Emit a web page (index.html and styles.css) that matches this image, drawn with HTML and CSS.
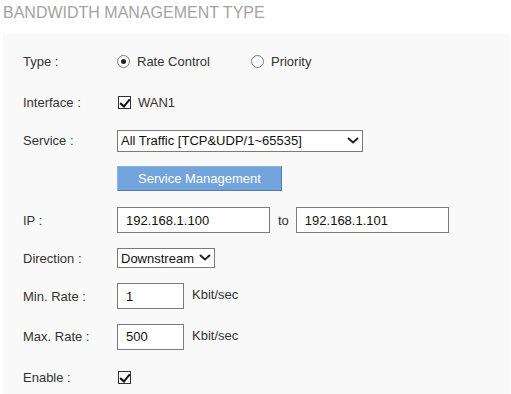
FILE: index.html
```html
<!DOCTYPE html>
<html lang="en">
<head>
    <meta charset="UTF-8">
    <meta name="viewport" content="width=device-width, initial-scale=1.0">
    <title>Bandwidth Management</title>
    <link rel="stylesheet" href="styles.css">
</head>

<body>
    <p class="title">BANDWIDTH MANAGEMENT TYPE</p>
    <div class="panel">
        <div class="label">Type :</div>
        <div class="field">
            <label class="opt"><input type="radio" name="type" class="radio" checked> Rate Control</label>
            <label class="opt opt-next"><input type="radio" name="type" class="radio"> Priority</label>
        </div>

        <div class="label">Interface :</div>
        <div class="field">
            <label class="opt"><input type="checkbox" class="check" checked> WAN1</label>
        </div>

        <div class="label">Service :</div>
        <div class="field">
            <span class="select-wrap">
                <select class="select service-select">
                    <option>All Traffic [TCP&amp;UDP/1~65535]</option>
                </select>
                <svg class="chevron" width="12" height="7" viewBox="0 0 12 7"><path d="M1 1 L6 5.5 L11 1" fill="none" stroke="#222" stroke-width="2"/></svg>
            </span>
        </div>

        <div class="label"></div>
        <div class="field">
            <button class="blue-btn">Service Management</button>
        </div>

        <div class="label">IP :</div>
        <div class="field">
            <input type="text" class="text-input ip-input" value="192.168.1.100">
            <span class="to">to</span>
            <input type="text" class="text-input ip-input" value="192.168.1.101">
        </div>

        <div class="label">Direction :</div>
        <div class="field">
            <span class="select-wrap">
                <select class="select dir-select">
                    <option>Downstream</option>
                    <option>Upstream</option>
                </select>
                <svg class="chevron" width="12" height="7" viewBox="0 0 12 7"><path d="M1 1 L6 5.5 L11 1" fill="none" stroke="#222" stroke-width="2"/></svg>
            </span>
        </div>

        <div class="label">Min. Rate :</div>
        <div class="field">
            <input type="text" class="text-input rate-input" value="1">
            <span class="unit">Kbit/sec</span>
        </div>

        <div class="label">Max. Rate :</div>
        <div class="field">
            <input type="text" class="text-input rate-input" value="500">
            <span class="unit">Kbit/sec</span>
        </div>

        <div class="label">Enable :</div>
        <div class="field">
            <input type="checkbox" class="check" checked>
        </div>
    </div>
</body>
</html>
```

FILE: styles.css
```css
*{
    font-family: "Liberation Sans", Arial, sans-serif;
    box-sizing: border-box;
}
body{
    margin: 0;
    padding: 4px 1px 0 3px;
    background-color: #ffffff;
    color: #333333;
    font-size: 13px;
}
.title{
    margin: 0 0 12px 0;
    font-size: 16px;
    line-height: 18px;
    color: #a3a3a3;
}
.panel{
    background-color: #f9f9f9;
    padding: 7px 0 0 20px;
    min-height: 362px;
    display: grid;
    grid-template-columns: 94px 1fr;
    grid-template-rows: 40px 42px 35px 41px 42px 34px 42px 39px 42px;
    align-items: center;
}
.label{
    font-size: 13px;
}
.field{
    display: flex;
    align-items: center;
}
.opt{
    display: flex;
    align-items: center;
    gap: 7px;
}
.opt-next{
    margin-left: 41px;
}
.radio{
    appearance: none;
    margin: 0 0 0 0;
    width: 13px;
    height: 13px;
    border: 1px solid #7a7a7a;
    border-radius: 50%;
    background-color: #ffffff;
    display: flex;
    align-items: center;
    justify-content: center;
}
.radio:checked::before{
    content: "";
    width: 5px;
    height: 5px;
    border-radius: 50%;
    background-color: #222222;
}
.check{
    appearance: none;
    margin: 0 0 0 1px;
    width: 13px;
    height: 13px;
    border: 1px solid #333333;
    background-color: #ffffff;
    position: relative;
}
.check:checked::before{
    content: "";
    position: absolute;
    left: 3px;
    top: 0px;
    width: 4px;
    height: 8px;
    border-right: 2px solid #111111;
    border-bottom: 2px solid #111111;
    transform: rotate(40deg);
}
.select-wrap{
    position: relative;
    display: inline-block;
}
.select{
    appearance: none;
    border: 1px solid #7a7a7a;
    background-color: #ffffff;
    color: #111111;
    font-size: 13px;
    border-radius: 0;
    margin: 0;
}
.service-select{
    width: 246px;
    height: 22px;
    padding: 0 0 0 3px;
}
.dir-select{
    width: 98px;
    height: 20px;
    padding: 0 0 0 3px;
}
.chevron{
    position: absolute;
    right: 4px;
    top: 50%;
    margin-top: -4px;
    pointer-events: none;
}
.blue-btn{
    width: 165px;
    height: 25px;
    background-color: #72a3da;
    color: #ffffff;
    font-size: 13px;
    border: 1px solid #5d8fc8;
    border-right-color: #4c7db5;
    border-bottom-color: #4c7db5;
    border-top-color: #8db5e3;
    border-left-color: #8db5e3;
    padding: 0;
    cursor: pointer;
}
.text-input{
    height: 26px;
    border: 1px solid #7a7a7a;
    background-color: #ffffff;
    color: #111111;
    font-size: 13px;
    padding: 0 0 0 8px;
    margin: 0;
    border-radius: 0;
}
.ip-input{
    width: 153px;
}
.to{
    margin: 0 7px 0 8px;
}
.rate-input{
    width: 67px;
}
.unit{
    margin-left: 8px;
    margin-bottom: 3px;
}
```
